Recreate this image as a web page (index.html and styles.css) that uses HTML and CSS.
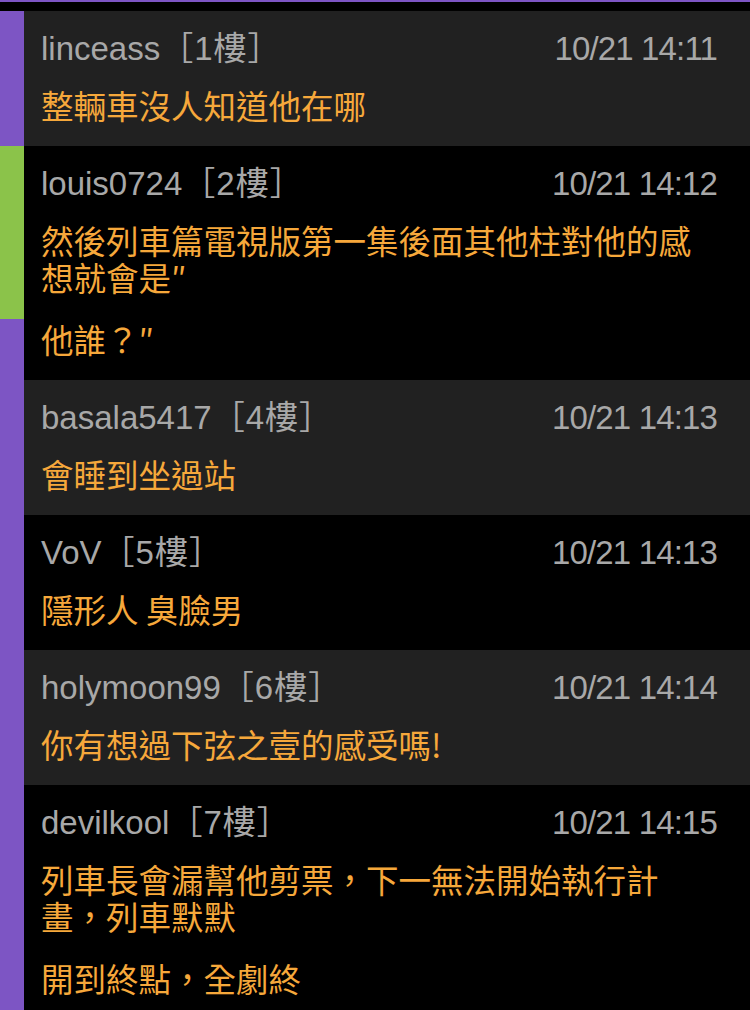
FILE: index.html
```html
<!DOCTYPE html>
<html lang="zh-Hant">
<head>
<meta charset="utf-8">
<link rel="stylesheet" href="styles.css">
</head>
<body>
<div class="topline"></div>
<div class="list">
  <div class="row gray">
    <div class="bar"></div>
    <div class="content">
      <div class="head"><span class="name">linceass<span class="floor">［1樓］</span></span><span class="time">10/21 14:11</span></div>
      <p class="msg">整輛車沒人知道他在哪</p>
    </div>
  </div>
  <div class="row">
    <div class="bar split"></div>
    <div class="content">
      <div class="head"><span class="name">louis0724<span class="floor">［2樓］</span></span><span class="time">10/21 14:12</span></div>
      <p class="msg">然後列車篇電視版第一集後面其他柱對他的感想就會是″</p>
      <p class="msg">他誰？″</p>
    </div>
  </div>
  <div class="row gray">
    <div class="bar"></div>
    <div class="content">
      <div class="head"><span class="name">basala5417<span class="floor">［4樓］</span></span><span class="time">10/21 14:13</span></div>
      <p class="msg">會睡到坐過站</p>
    </div>
  </div>
  <div class="row">
    <div class="bar"></div>
    <div class="content">
      <div class="head"><span class="name">VoV<span class="floor">［5樓］</span></span><span class="time">10/21 14:13</span></div>
      <p class="msg">隱形人 臭臉男</p>
    </div>
  </div>
  <div class="row gray">
    <div class="bar"></div>
    <div class="content">
      <div class="head"><span class="name">holymoon99<span class="floor">［6樓］</span></span><span class="time">10/21 14:14</span></div>
      <p class="msg">你有想過下弦之壹的感受嗎!</p>
    </div>
  </div>
  <div class="row">
    <div class="bar"></div>
    <div class="content">
      <div class="head"><span class="name">devilkool<span class="floor">［7樓］</span></span><span class="time">10/21 14:15</span></div>
      <p class="msg">列車長會漏幫他剪票，下一無法開始執行計畫，列車默默</p>
      <p class="msg">開到終點，全劇終</p>
    </div>
  </div>
</div>
</body>
</html>
```

FILE: styles.css
```css
html, body {
  margin: 0;
  padding: 0;
  background: #000;
}
body {
  width: 750px;
  height: 1010px;
  overflow: hidden;
  font-family: "Liberation Sans", "Noto Sans CJK TC", sans-serif;
}
.topline {
  height: 2px;
  background: #7d55c4;
  margin-bottom: 9px;
}
.list {
  display: flex;
  flex-direction: column;
}
.row {
  display: flex;
  background: #000;
}
.row.gray {
  background: #212121;
}
.bar {
  width: 24px;
  flex: none;
  background: #7d55c4;
}
.bar.split {
  background: linear-gradient(to bottom, #8bc34a 0, #8bc34a 173px, #7d55c4 173px);
}
.content {
  flex: 1;
  padding: 18px 34px 23px 17px;
  min-width: 0;
}
.head {
  display: flex;
  justify-content: space-between;
  align-items: baseline;
  height: 40px;
  line-height: 40px;
  margin-bottom: 17px;
  font-size: 33px;
  color: #a8a8a8;
}
.floor {
  letter-spacing: 1px;
}
.time {
  letter-spacing: -0.85px;
  margin-right: -1px;
}
.msg {
  margin: 0;
  font-family: "Noto Sans CJK TC", sans-serif;
  font-size: 32.5px;
  line-height: 37px;
  color: #f6a83b;
  line-break: strict;
}
.msg + .msg {
  margin-top: 25px;
}
```
